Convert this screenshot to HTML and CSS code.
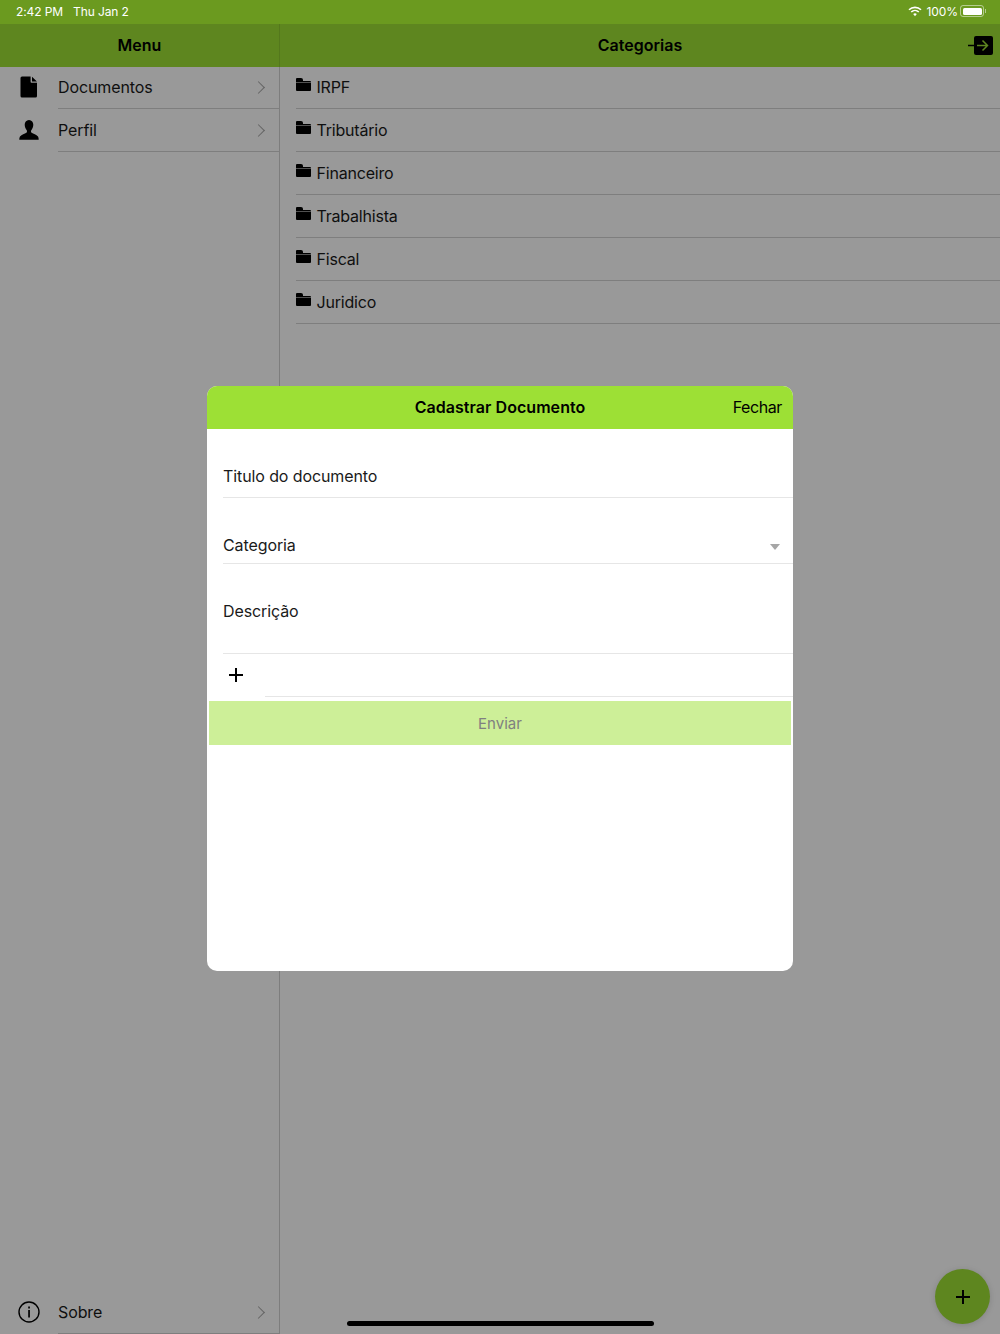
FILE: index.html
```html
<!doctype html>
<html lang="pt">

<head>
  <title>Categorias</title>
  <link rel="stylesheet" href="styles.css">
</head>

<body>
  <div class="status-bar">
    <div class="status-left">
      <span>2:42 PM</span>
      <span>Thu Jan 2</span>
    </div>
    <div class="status-right">
      <svg class="wifi" width="14" height="11" viewBox="0 0 14 11">
        <path d="M1 3.8a8.6 8.6 0 0 1 12 0" fill="none" stroke="#fff" stroke-width="1.6"/>
        <path d="M3.2 6a5.5 5.5 0 0 1 7.6 0" fill="none" stroke="#fff" stroke-width="1.6"/>
        <path d="M5.2 8a2.6 2.6 0 0 1 3.6 0L7 10.2z" fill="#fff"/>
      </svg>
      <span>100%</span>
      <div class="battery"><div class="battery-fill"></div></div>
      <div class="battery-cap"></div>
    </div>
  </div>

  <div class="app">
    <aside class="sidebar">
      <header class="navbar">Menu</header>
      <ul class="menu">
        <li class="menu-item">
          <svg class="menu-icon" width="18" height="22" viewBox="0 0 18 22">
            <path d="M2 .5h8.6v5.2c0 .6.4 1 1 1H17V20a1.5 1.5 0 0 1-1.500 1.500H2A1.500 1.500 0 0 1 .5 20V2A1.500 1.500 0 0 1 2 .5zM12 .7l4.900 4.700H12z" fill="#000"/>
          </svg>
          <div class="menu-label">Documentos <span class="chevron"></span></div>
        </li>
        <li class="menu-item">
          <svg class="menu-icon" width="20" height="20" viewBox="0 0 20 20">
            <path d="M10 0c2.800 0 4.300 2.200 4.300 4.800 0 2.200-.9 4.200-2 5.400-.5.600-.4 2 .3 2.500 1.600 1 4.800 1.900 6.400 3.800.5.700.7 2 .7 3.200H.3c0-1.200.2-2.500.7-3.200 1.600-1.900 4.800-2.800 6.400-3.800.7-.5.800-1.900.3-2.500-1.100-1.200-2-3.200-2-5.400C5.700 2.200 7.200 0 10 0z" fill="#000"/>
          </svg>
          <div class="menu-label">Perfil <span class="chevron"></span></div>
        </li>
      </ul>
      <div class="menu-item menu-bottom">
        <svg class="menu-icon" width="22" height="22" viewBox="0 0 22 22">
          <circle cx="11" cy="11" r="10" fill="none" stroke="#000" stroke-width="1.400"/>
          <rect x="10.200" y="5.500" width="1.700" height="2" fill="#000"/>
          <rect x="10.200" y="9" width="1.700" height="7.500" fill="#000"/>
        </svg>
        <div class="menu-label">Sobre <span class="chevron"></span></div>
      </div>
    </aside>

    <main class="content">
      <header class="navbar">
        Categorias
        <svg class="logout" width="26" height="21" viewBox="0 0 26 21">
          <rect x="6" y="1" width="19" height="19" rx="2" fill="#000"/>
          <path d="M0 10.500h18" stroke="#000" stroke-width="1.500"/>
          <path d="M9 10.500h10M14.500 5.500l5 5-5 5" fill="none" stroke="#9de035" stroke-width="1.500"/>
        </svg>
      </header>
      <ul class="categories">
        <li class="category"><span class="folder"></span>IRPF</li>
        <li class="category"><span class="folder"></span>Tributário</li>
        <li class="category"><span class="folder"></span>Financeiro</li>
        <li class="category"><span class="folder"></span>Trabalhista</li>
        <li class="category"><span class="folder"></span>Fiscal</li>
        <li class="category"><span class="folder"></span>Juridico</li>
      </ul>
      <button class="fab" type="button"><span class="plus"></span></button>
    </main>
  </div>

  <div class="scrim">
    <div class="modal">
      <header class="modal-header">
        <span class="modal-title">Cadastrar Documento</span>
        <span class="modal-close">Fechar</span>
      </header>
      <form class="modal-form">
        <div class="field field-title">Titulo do documento</div>
        <div class="field field-select">Categoria <span class="caret"></span></div>
        <div class="field field-desc">Descrição</div>
        <div class="attach">
          <div class="attach-btn"><span class="plus"></span></div>
          <div class="attach-line"></div>
        </div>
        <button class="submit" type="button">Enviar</button>
      </form>
    </div>
  </div>

  <div class="home-indicator"></div>
</body>

</html>
```

FILE: styles.css
```css
* {
  box-sizing: border-box;
}

html,
body {
  height: 100%;
}

body {
  margin: 0;
  height: 1334px;
  overflow: hidden;
  display: flex;
  flex-direction: column;
  font-family: Inter, "Liberation Sans", sans-serif;
  background-color: #fff;
  color: #000;
}

ul {
  list-style: none;
  margin: 0;
  padding: 0;
}

/* status bar sits above the scrim */
.status-bar {
  position: relative;
  z-index: 3;
  flex: none;
  height: 24px;
  padding: 0 14px 2px 16px;
  display: flex;
  justify-content: space-between;
  align-items: center;
  background-color: #6b9a1f;
  color: #fff;
  font-size: 12px;
  letter-spacing: -0.1px;
}

.status-left {
  display: flex;
  gap: 10px;
}

.status-right {
  display: flex;
  align-items: center;
}

.wifi {
  margin-right: 5px;
}

.battery {
  width: 24px;
  height: 12px;
  margin-left: 2px;
  padding: 1.500px;
  border: 1px solid rgba(255, 255, 255, 0.5);
  border-radius: 3px;
}

.battery-fill {
  height: 100%;
  background-color: #fff;
  border-radius: 1.500px;
}

.battery-cap {
  width: 1px;
  height: 4px;
  margin-left: 1px;
  background-color: rgba(255, 255, 255, 0.5);
}

.app {
  flex: 1;
  display: flex;
  min-height: 0;
}

.navbar {
  position: relative;
  height: 43px;
  padding-bottom: 2px;
  display: flex;
  align-items: center;
  justify-content: center;
  background-color: #9de035;
  font-size: 16px;
  font-weight: 600;
}

.sidebar {
  flex: none;
  width: 280px;
  display: flex;
  flex-direction: column;
  border-right: 1px solid #d0d0d0;
}

.sidebar .navbar {
  margin-right: -1px;
  border-right: 1px solid #8cc92f;
}

.menu {
  flex: 1;
  margin-top: -1px;
}

.menu-item {
  height: 43px;
  display: flex;
  align-items: stretch;
  font-size: 16px;
  letter-spacing: -0.1px;
  position: relative;
}

.menu-icon {
  position: absolute;
  left: 29px;
  top: 21px;
  transform: translate(-50%, -50%);
}

.menu-label {
  flex: 1;
  margin-left: 58px;
  display: flex;
  align-items: center;
  justify-content: space-between;
  padding-right: 16px;
  border-bottom: 1px solid #d2d2d2;
  color: #1a1a1a;
}

.chevron {
  width: 9px;
  height: 9px;
  border-top: 1.500px solid #a6a6a6;
  border-right: 1.500px solid #a6a6a6;
  transform: rotate(45deg);
}

.content {
  flex: 1;
  min-width: 0;
  position: relative;
}

.logout {
  position: absolute;
  right: 6px;
  top: 11px;
}

.categories {
  margin-top: -1px;
  padding-left: 16px;
}

.category {
  height: 43px;
  display: flex;
  align-items: center;
  gap: 5.500px;
  border-bottom: 1px solid #d2d2d2;
  font-size: 16px;
  letter-spacing: -0.2px;
  color: #1a1a1a;
}

.folder {
  position: relative;
  top: -2px;
  width: 15px;
  height: 10.500px;
  margin-top: 2px;
  background-color: #000;
  border-radius: 1px;
}

.folder::before {
  content: "";
  position: absolute;
  left: 0;
  top: -2.500px;
  width: 7px;
  height: 4px;
  background-color: #000;
  border-radius: 1px 2px 0 0;
}

.folder::after {
  content: "";
  position: absolute;
  left: 0;
  right: 0;
  top: 1px;
  height: 0.600px;
  background-color: #888;
}

.fab {
  position: absolute;
  right: 10px;
  bottom: 10px;
  width: 55px;
  height: 55px;
  padding: 0;
  border: none;
  border-radius: 50%;
  display: flex;
  align-items: center;
  justify-content: center;
  background-color: #9de035;
  box-shadow: 0 1px 6px rgba(0, 0, 0, 0.15);
}

.plus {
  position: relative;
  display: block;
  width: 14px;
  height: 14px;
  background:
    linear-gradient(#000, #000) center / 100% 2px no-repeat,
    linear-gradient(#000, #000) center / 2px 100% no-repeat;
}

.scrim {
  position: absolute;
  z-index: 2;
  top: 23px;
  left: 0;
  right: 0;
  bottom: 0;
  display: flex;
  align-items: center;
  justify-content: center;
  background-color: rgba(0, 0, 0, 0.4);
}

.modal {
  width: 586px;
  height: 585px;
  border-radius: 10px;
  overflow: hidden;
  background-color: #fff;
}

.modal-header {
  position: relative;
  height: 43px;
  padding-bottom: 1px;
  display: flex;
  align-items: center;
  justify-content: center;
  background-color: #9de035;
  font-size: 16px;
}

.modal-title {
  font-weight: 600;
  letter-spacing: 0.05px;
}

.modal-close {
  position: absolute;
  right: 11px;
  letter-spacing: -0.4px;
}

.modal-form {
  display: flex;
  flex-direction: column;
}

.field {
  margin-left: 16px;
  border-bottom: 1px solid #e6e6e6;
  font-size: 16px;
  letter-spacing: -0.1px;
  color: #1a1a1a;
}

.field-title {
  height: 69px;
  padding-top: 37px;
}

.field-select {
  position: relative;
  height: 66px;
  padding-top: 37px;
}

.caret {
  position: absolute;
  right: 13px;
  top: 46px;
  width: 0;
  height: 0;
  border-left: 5px solid transparent;
  border-right: 5px solid transparent;
  border-top: 6px solid #a6a6a6;
}

.field-desc {
  height: 90px;
  padding-top: 37px;
}

.attach {
  display: flex;
  height: 43px;
}

.attach-btn {
  width: 58px;
  padding-bottom: 2px;
  display: flex;
  align-items: center;
  justify-content: center;
}

.attach-line {
  flex: 1;
  border-bottom: 1px solid #e6e6e6;
}

.submit {
  height: 44px;
  margin: 4px 2px 0;
  border: none;
  background-color: #cdef98;
  color: #808080;
  font-family: inherit;
  font-size: 15px;
}

.home-indicator {
  position: absolute;
  z-index: 3;
  left: 347px;
  bottom: 8px;
  width: 307px;
  height: 5px;
  border-radius: 3px;
  background-color: #000;
}
```
